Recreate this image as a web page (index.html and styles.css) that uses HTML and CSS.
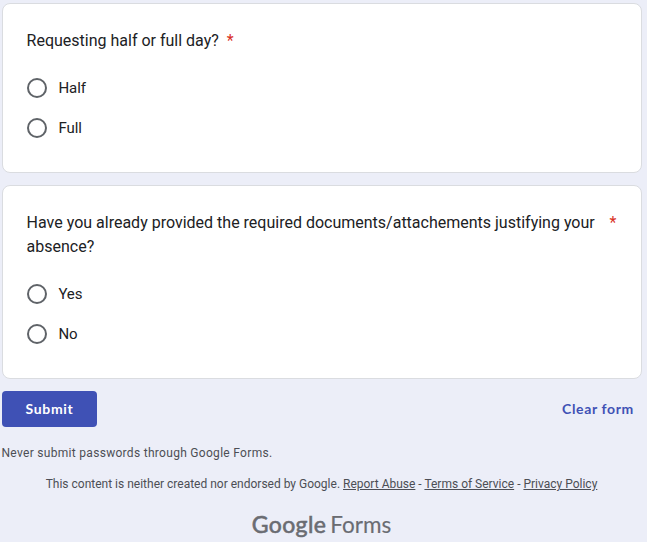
FILE: index.html
```html
<!DOCTYPE html>
<html lang="en">
<head>
<meta charset="utf-8">
<title>Form</title>
<link rel="stylesheet" href="styles.css">
</head>
<body>
<form class="form">
  <section class="card card-short">
    <div class="question"><span>Requesting half or full day?</span><span class="required">*</span></div>
    <div class="options">
      <label class="option"><span class="radio"></span><span>Half</span></label>
      <label class="option"><span class="radio"></span><span>Full</span></label>
    </div>
  </section>
  <section class="card card-tall">
    <div class="question wide"><span>Have you already provided the required documents/attachements justifying your absence?</span><span class="required">*</span></div>
    <div class="options">
      <label class="option"><span class="radio"></span><span>Yes</span></label>
      <label class="option"><span class="radio"></span><span>No</span></label>
    </div>
  </section>
  <div class="actions">
    <button class="submit" type="button"><span class="submit-text">Submit</span></button>
    <button class="clear" type="button"><span class="clear-text">Clear form</span></button>
  </div>
</form>
<footer class="footer">
  <p class="warning">Never submit passwords through Google Forms.</p>
  <p class="legal"><span class="legal-text">This content is neither created nor endorsed by Google. <a href="#">Report Abuse</a> - <a href="#">Terms of Service</a> - <a href="#">Privacy Policy</a></span></p>
  <div class="brand"><span class="google">Google</span><span class="forms">Forms</span></div>
</footer>
</body>
</html>
```
FILE: styles.css
```css
* { box-sizing: border-box; }
body { margin: 0; height: 542px; overflow: hidden; background: #eceef8; font-family: Roboto, "Liberation Sans", sans-serif; color: #202124; }
.form { padding: 3px 5px 0 2px; }
.card { border: 1px solid #dadce0; border-radius: 8px; background: #fff; padding: 25px 24.5px 0 23.6px; margin-bottom: 12px; }
.card-short { height: 170px; }
.card-tall { height: 194px; }
.question { display: flex; font-size: 16px; line-height: 24px; }
.required { color: #d93025; padding-left: 8px; flex: none; }
.wide .required { margin-left: auto; }
.options { margin-top: 15px; }
.option { display: flex; align-items: center; height: 40px; font-size: 15px; letter-spacing: -.05px; }
.radio { width: 20px; height: 20px; border: 2px solid #5f6368; border-radius: 50%; margin-right: 11.8px; }
.actions { display: flex; justify-content: space-between; height: 36px; }
button { border: 0; background: none; font: 700 14px/20px Lato, sans-serif; letter-spacing: .65px; padding: 0; }
.submit { width: 95px; background: #3f51b5; color: #fff; border-radius: 4px; }
.clear { color: #3f51b5; padding-right: 8px; }
.footer { font-size: 12px; color: #4c4e55; }
.warning { margin: 18px 0 0 1.5px; line-height: 16px; letter-spacing: .3px; }
.legal { margin: 15px 4px 0 0; text-align: center; line-height: 16px; }
.legal a { color: inherit; }
.brand { display: flex; justify-content: center; align-items: baseline; gap: 4px; margin: 18px 4px 0 0; font-family: Lato, sans-serif; font-size: 23px; line-height: 28px; color: #6a6c72; }
.google { letter-spacing: .35px; -webkit-text-stroke: .6px currentColor; }
.forms { font-size: 22.5px; -webkit-text-stroke: .15px currentColor; }
```
